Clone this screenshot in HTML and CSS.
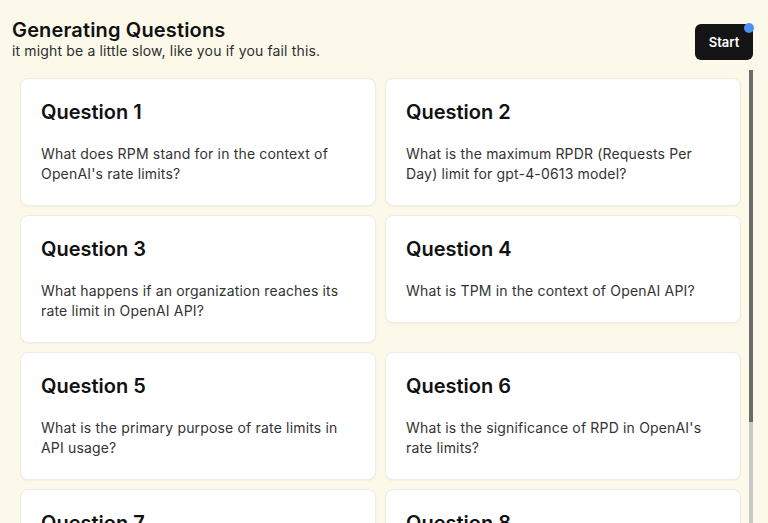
FILE: index.html
```html
<!DOCTYPE html>
<html lang="en">
<head>
<meta charset="utf-8">
<title>Generating Questions</title>
<link rel="stylesheet" href="styles.css">
</head>
<body>
<div class="page">
  <header class="header">
    <div class="heading">
      <h1 class="title">Generating Questions</h1>
      <p class="subtitle">it might be a little slow, like you if you fail this.</p>
    </div>
    <button class="start">Start<span class="dot"></span></button>
  </header>
  <div class="body-row">
    <main class="list">
      <div class="grid">
        <div class="card"><h2 class="card-title">Question 1</h2><p class="card-text">What does RPM stand for in the context of OpenAI's rate limits?</p></div>
        <div class="card"><h2 class="card-title">Question 2</h2><p class="card-text">What is the maximum RPDR (Requests Per Day) limit for gpt-4-0613 model?</p></div>
        <div class="card"><h2 class="card-title">Question 3</h2><p class="card-text">What happens if an organization reaches its rate limit in OpenAI API?</p></div>
        <div class="card"><h2 class="card-title">Question 4</h2><p class="card-text">What is TPM in the context of OpenAI API?</p></div>
        <div class="card"><h2 class="card-title">Question 5</h2><p class="card-text">What is the primary purpose of rate limits in API usage?</p></div>
        <div class="card"><h2 class="card-title">Question 6</h2><p class="card-text">What is the significance of RPD in OpenAI's rate limits?</p></div>
        <div class="card"><h2 class="card-title">Question 7</h2><p class="card-text">How can you increase the rate limits for your organization?</p></div>
        <div class="card"><h2 class="card-title">Question 8</h2><p class="card-text">Which headers show your remaining requests and tokens?</p></div>
      </div>
    </main>
    <div class="scrollbar"><div class="thumb"></div></div>
  </div>
</div>
</body>
</html>
```
FILE: styles.css
```css
* { box-sizing: border-box; }
html, body {
  margin: 0;
  padding: 0;
  height: 100%;
  background: #fcf9ea;
  font-family: Inter, "Noto Sans", sans-serif;
  color: #111;
}
.page {
  height: 100vh;
  display: flex;
  flex-direction: column;
  padding: 0 15px 0 12px;
  overflow: hidden;
}
.header {
  display: flex;
  justify-content: space-between;
  align-items: flex-start;
  padding-top: 18px;
  flex: none;
}
.title {
  margin: 0;
  font-size: 20px;
  line-height: 24px;
  font-weight: 600;
  color: #111;
  letter-spacing: 0.15px;
}
.subtitle {
  margin: 0;
  font-size: 14px;
  line-height: 17px;
  color: #2e2e2e;
  letter-spacing: 0.15px;
}
.start {
  position: relative;
  margin-top: 6px;
  width: 58px;
  height: 36px;
  border: none;
  border-radius: 6px;
  background: #141414;
  color: #fff;
  font-family: Inter, "Noto Sans", sans-serif;
  font-size: 13px;
  font-weight: 600;
  padding: 0;
  cursor: pointer;
}
.dot {
  position: absolute;
  top: -1px;
  right: -1px;
  width: 10px;
  height: 10px;
  border-radius: 50%;
  background: #4d92f0;
}
.body-row {
  flex: 1;
  min-height: 0;
  margin-top: 10px;
  display: flex;
}
.list {
  flex: 1;
  min-width: 0;
  overflow: hidden;
  padding: 8px;
}
.scrollbar {
  flex: none;
  width: 4px;
  background: #c8c8c6;
  display: flex;
  flex-direction: column;
}
.thumb {
  height: 352px;
  background: #6b6b6b;
}
.grid {
  display: grid;
  grid-template-columns: 1fr 1fr;
  gap: 9px;
  align-items: start;
}
.card {
  background: #fff;
  border: 1px solid #efece0;
  border-radius: 8px;
  padding: 21px 20px 21px;
  box-shadow: 0 1px 2px rgba(0, 0, 0, 0.04);
}
.card-title {
  margin: 0 0 20px;
  font-size: 20px;
  line-height: 24px;
  font-weight: 600;
  color: #111;
  letter-spacing: 0;
}
.card-text {
  margin: 0;
  font-size: 14px;
  line-height: 20px;
  color: #333;
  letter-spacing: 0.17px;
}
```
